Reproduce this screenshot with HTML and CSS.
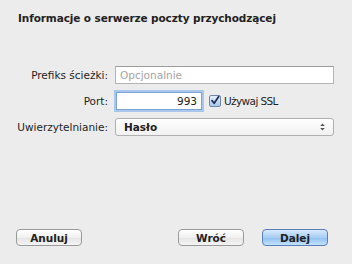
FILE: index.html
```html
<!DOCTYPE html>
<html lang="pl">
  <head>
    <meta charset="UTF-8" />
    <title>Informacje o serwerze poczty przychodzącej</title>
    <link rel="stylesheet" href="styles.css">
  </head>
  <body>
    <div class="sheet">
      <h1 class="title">Informacje o serwerze poczty przychodzącej</h1>

      <div class="form">
        <label class="label">Prefiks ścieżki:</label>
        <div class="field">
          <input type="text" class="text-input wide" placeholder="Opcjonalnie" />
        </div>

        <label class="label">Port:</label>
        <div class="field">
          <input type="text" class="text-input port" value="993" />
          <span class="check">
            <span class="box">
              <svg width="11" height="11" viewBox="0 0 11 11">
                <path d="M2.2 5.6 L4.6 8.6 L9.6 1.2" fill="none" stroke="#1c2f57" stroke-width="1.9" stroke-linecap="round" stroke-linejoin="round"/>
              </svg>
            </span>
            <span class="check-text">Używaj SSL</span>
          </span>
        </div>

        <label class="label">Uwierzytelnianie:</label>
        <div class="field">
          <div class="popup">
            <span>Hasło</span>
            <svg width="7" height="10" viewBox="0 0 7 10">
              <path d="M1.2 4 L3.5 1.4 L5.8 4 Z M1.2 6 L3.5 8.6 L5.8 6 Z" fill="#555"/>
            </svg>
          </div>
        </div>
      </div>

      <div class="buttons">
        <button class="btn">Anuluj</button>
        <div class="right">
          <button class="btn">Wróć</button>
          <button class="btn default">Dalej</button>
        </div>
      </div>
    </div>
  </body>
</html>
```

FILE: styles.css
```css
* {
  margin: 0;
  padding: 0;
  box-sizing: border-box;
  font-family: "DejaVu Sans", sans-serif;
}

body {
  background: #ececec;
  width: 352px;
  height: 264px;
  overflow: hidden;
}

.sheet {
  display: flex;
  flex-direction: column;
  height: 264px;
  padding: 12px 16px 0 18px;
}

.title {
  font-size: 10.5px;
  font-weight: bold;
  color: #222;
  line-height: 13px;
  letter-spacing: -0.1px;
}

.form {
  display: grid;
  grid-template-columns: 94px 1fr;
  column-gap: 7px;
  row-gap: 7px;
  margin-top: 40px;
  margin-left: -4px;
}

.label {
  font-size: 10.5px;
  color: #1e1e1e;
  text-align: right;
  align-self: center;
  white-space: nowrap;
}

.field {
  display: flex;
  align-items: center;
  height: 19px;
}

.text-input {
  height: 18px;
  border: 1px solid #b4b4b4;
  border-top-color: #9c9c9c;
  background: #fff;
  font-size: 10.5px;
  padding: 0 4px;
  color: #222;
  outline: none;
}

.text-input::placeholder {
  color: #a4a4a4;
}

.wide {
  width: 219px;
}

.port {
  width: 86px;
  text-align: right;
  border-color: #7ea3d3;
  box-shadow: 0 0 0 2px #a9c6ec;
  margin-left: 1px;
}

.check {
  display: flex;
  align-items: center;
  gap: 3px;
  margin-left: 7px;
  font-size: 10.5px;
  color: #1e1e1e;
}

.check-text {
  letter-spacing: -0.6px;
}

.box {
  width: 12px;
  height: 12px;
  border: 1px solid #6f86a8;
  border-radius: 2px;
  background: linear-gradient(#e4effb, #a9c8ea);
  display: flex;
  align-items: center;
  justify-content: center;
}

.popup {
  width: 219px;
  height: 18px;
  border: 1px solid #b0b0b0;
  border-radius: 3px;
  background: linear-gradient(#ffffff, #f1f1f1);
  display: flex;
  align-items: center;
  justify-content: space-between;
  padding: 0 7px 0 8px;
  font-size: 10.5px;
  font-weight: bold;
  color: #222;
}

.buttons {
  display: flex;
  justify-content: space-between;
  margin-top: auto;
  margin-bottom: 18px;
  margin-left: -2px;
  margin-right: 8px;
}

.right {
  display: flex;
  gap: 18px;
}

.btn {
  width: 66px;
  height: 17px;
  border: 1px solid #9a9a9a;
  border-radius: 4px;
  background: linear-gradient(#ffffff, #f0f0f0 50%, #e4e4e4 51%, #f4f4f4);
  font-size: 10.5px;
  font-weight: bold;
  color: #222;
}

.default {
  border-color: #5a7fb8;
  background: linear-gradient(#d7e9fb, #a8cdf3 50%, #8ebff0 51%, #c4e2fc);
}
```
